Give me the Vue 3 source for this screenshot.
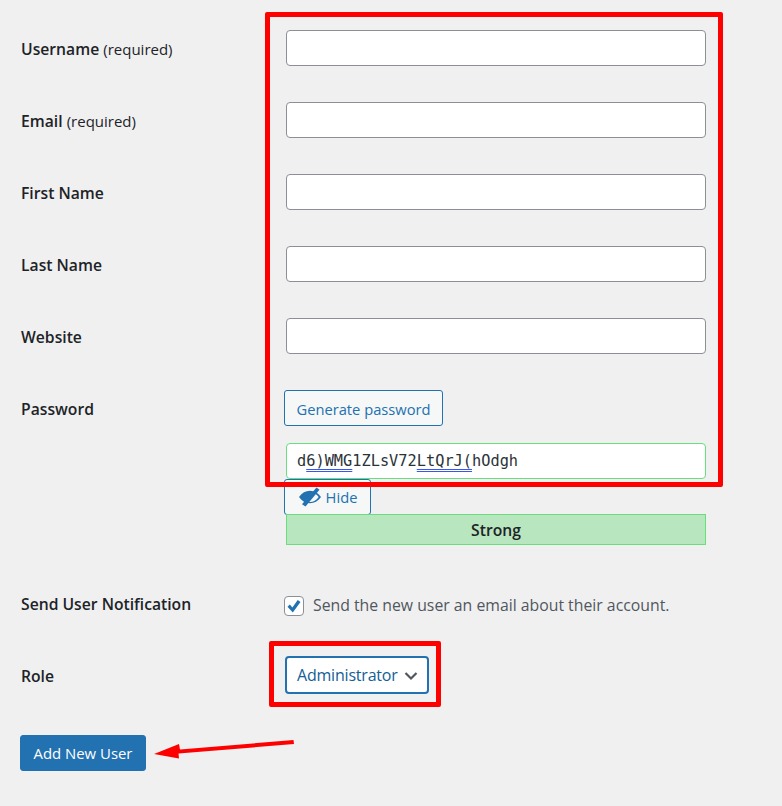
<script setup>
const rows = [
  { label: 'Username', note: '(required)' },
  { label: 'Email', note: '(required)' },
  { label: 'First Name' },
  { label: 'Last Name' },
  { label: 'Website' },
]
</script>

<template>
  <div class="page">
    <form class="user-form" @submit.prevent>
      <div v-for="row in rows" :key="row.label" class="form-row">
        <label class="row-label">{{ row.label }} <span v-if="row.note" class="note">{{ row.note }}</span></label>
        <input class="text-input" type="text" />
      </div>

      <div class="form-row password-row">
        <label class="row-label">Password</label>
        <div class="password-fields">
          <button class="secondary generate" type="button">Generate password</button>
          <div class="password-input">d<u>6)WMG</u>1ZLsV72<u>LtQrJ(</u>hOdgh</div>
          <button class="secondary hide" type="button">
            <svg class="eye" width="24" height="20" viewBox="0 0 24 20">
              <path d="M1 10C4 5.800 7.600 3.800 12 3.800c4.400 0 8 2 11 6.200-3 4.200-6.600 6.200-11 6.200S4 14.200 1 10zm13.500-4.200L7.500 14c1.300.7 2.800 1 4.500 1 3.500 0 6.300-1.700 8.700-5-1.600-2.100-3.700-3.600-6.200-4.200z" />
              <path d="M18.500 .5l3 2.200L7.500 19.500l-3.500-2.300z" />
            </svg>
            <span>Hide</span>
          </button>
          <div class="strength">Strong</div>
        </div>
      </div>

      <div class="form-row notify-row">
        <label class="row-label">Send User Notification</label>
        <label class="check-line">
          <span class="checkbox">
            <svg width="18" height="18" viewBox="0 0 18 18">
              <path d="M2.500 9.800l2.300-2.200 2.600 2.800 5.300-7.400 2.800 2-7.700 10.500z" />
            </svg>
          </span>
          <span class="check-text">Send the new user an email about their account.</span>
        </label>
      </div>

      <div class="form-row role-row">
        <label class="row-label">Role</label>
        <div class="select">
          <span>Administrator</span>
          <svg width="14" height="10" viewBox="0 0 14 10">
            <path d="M1.500 2l5.500 5.500L12.500 2" />
          </svg>
        </div>
      </div>

      <button class="primary" type="button">Add New User</button>
    </form>

    <!-- annotations drawn on top of the screenshot -->
    <div class="mark mark-fields"></div>
    <div class="mark mark-role"></div>
    <svg class="arrow" width="150" height="30" viewBox="0 0 150 30">
      <path d="M143.500 6L30 15.500l-1 -5.500L4 20l25 4.500 -.5-5L144 10z" />
    </svg>
  </div>
</template>

<style scoped>
.page {
  position: relative;
  width: 782px;
  height: 806px;
  overflow: hidden;
  background: #f0f0f1;
  color: #1d2327;
  font-family: "Open Sans", sans-serif;
  font-size: 14.7px;
}

.user-form {
  padding: 12px 0 0 21px;
}

.form-row {
  display: grid;
  grid-template-columns: 265px 420px;
  padding: 18px 0;
}

.row-label {
  padding-top: 9px;
  font-size: 15.7px;
  line-height: 20px;
  font-weight: 600;
}

.note {
  font-size: 15px;
  font-weight: 400;
}

.text-input {
  display: block;
  box-sizing: border-box;
  width: 420px;
  height: 36px;
  margin: 0;
  background: #fff;
  border: 1px solid #8c8f94;
  border-radius: 4px;
}

.password-fields {
  display: flex;
  flex-direction: column;
  align-items: flex-start;
}

.secondary {
  display: flex;
  align-items: center;
  justify-content: center;
  box-sizing: border-box;
  height: 36px;
  margin-left: -2px;
  padding: 0;
  background: #f6f7f7;
  border: 1px solid #2271b1;
  border-radius: 3px;
  color: #2271b1;
  font-family: inherit;
  font-size: 14.7px;
}

.generate {
  width: 159px;
  margin-bottom: 17px;
  padding-top: 1px;
}

.password-input {
  box-sizing: border-box;
  width: 420px;
  height: 36px;
  padding-left: 10px;
  background: #fff;
  border: 1px solid #68de7c;
  border-radius: 4px;
  font-family: "DejaVu Sans Mono", monospace;
  font-size: 15.3px;
  line-height: 34px;
  color: #2c3338;
}

.password-input u {
  text-decoration: underline double #3858e9 1px;
  text-underline-offset: 3px;
}

.hide {
  gap: 4px;
  width: 87px;
}

.eye {
  fill: #2271b1;
}

.strength {
  box-sizing: border-box;
  width: 420px;
  height: 31px;
  margin-top: -1px;
  background: #b8e6bf;
  border: 1px solid #68de7c;
  font-size: 15.7px;
  font-weight: 600;
  line-height: 30px;
  text-align: center;
}

.notify-row {
  padding: 33px 0 0;
}

.notify-row .row-label {
  padding-top: 0;
  margin-top: -2px;
}

.check-line {
  display: flex;
  align-items: center;
  gap: 9px;
  height: 19px;
  margin-left: -2px;
  color: #50575e;
  font-size: 15.8px;
  white-space: nowrap;
}

.check-text {
  margin-top: -2px;
}

.checkbox {
  display: flex;
  box-sizing: border-box;
  width: 20px;
  height: 20px;
  background: #fff;
  border: 1px solid #8c8f94;
  border-radius: 4px;
  align-items: center;
  justify-content: center;
}

.checkbox svg {
  fill: #2271b1;
}

.role-row {
  padding: 41px 0 0;
}

.role-row .row-label {
  padding-top: 10px;
}

.select {
  display: flex;
  align-items: center;
  justify-content: space-between;
  box-sizing: border-box;
  width: 144px;
  height: 38px;
  margin-left: -1px;
  padding: 0 9px 0 10px;
  background: #fff;
  border: 2px solid #2271b1;
  border-radius: 4px;
  color: #135e96;
  font-size: 16px;
  letter-spacing: -0.2px;
}

.select svg {
  fill: none;
  stroke: #50575e;
  stroke-width: 2.2;
  margin-top: 2px;
}

.primary {
  display: block;
  box-sizing: border-box;
  width: 126px;
  height: 36px;
  margin: 41px 0 0 -1px;
  padding: 0;
  background: #2271b1;
  border: 1px solid #2271b1;
  border-radius: 3px;
  color: #fff;
  font-family: inherit;
  font-size: 14.9px;
}

.mark {
  position: absolute;
  box-sizing: border-box;
  border: 5px solid #ff0000;
  border-radius: 2px;
}

.mark-fields {
  left: 265px;
  top: 12px;
  width: 458px;
  height: 475px;
}

.mark-role {
  left: 269px;
  top: 641px;
  width: 172px;
  height: 66px;
}

.arrow {
  position: absolute;
  left: 150px;
  top: 734px;
  fill: #ff0000;
}
</style>
